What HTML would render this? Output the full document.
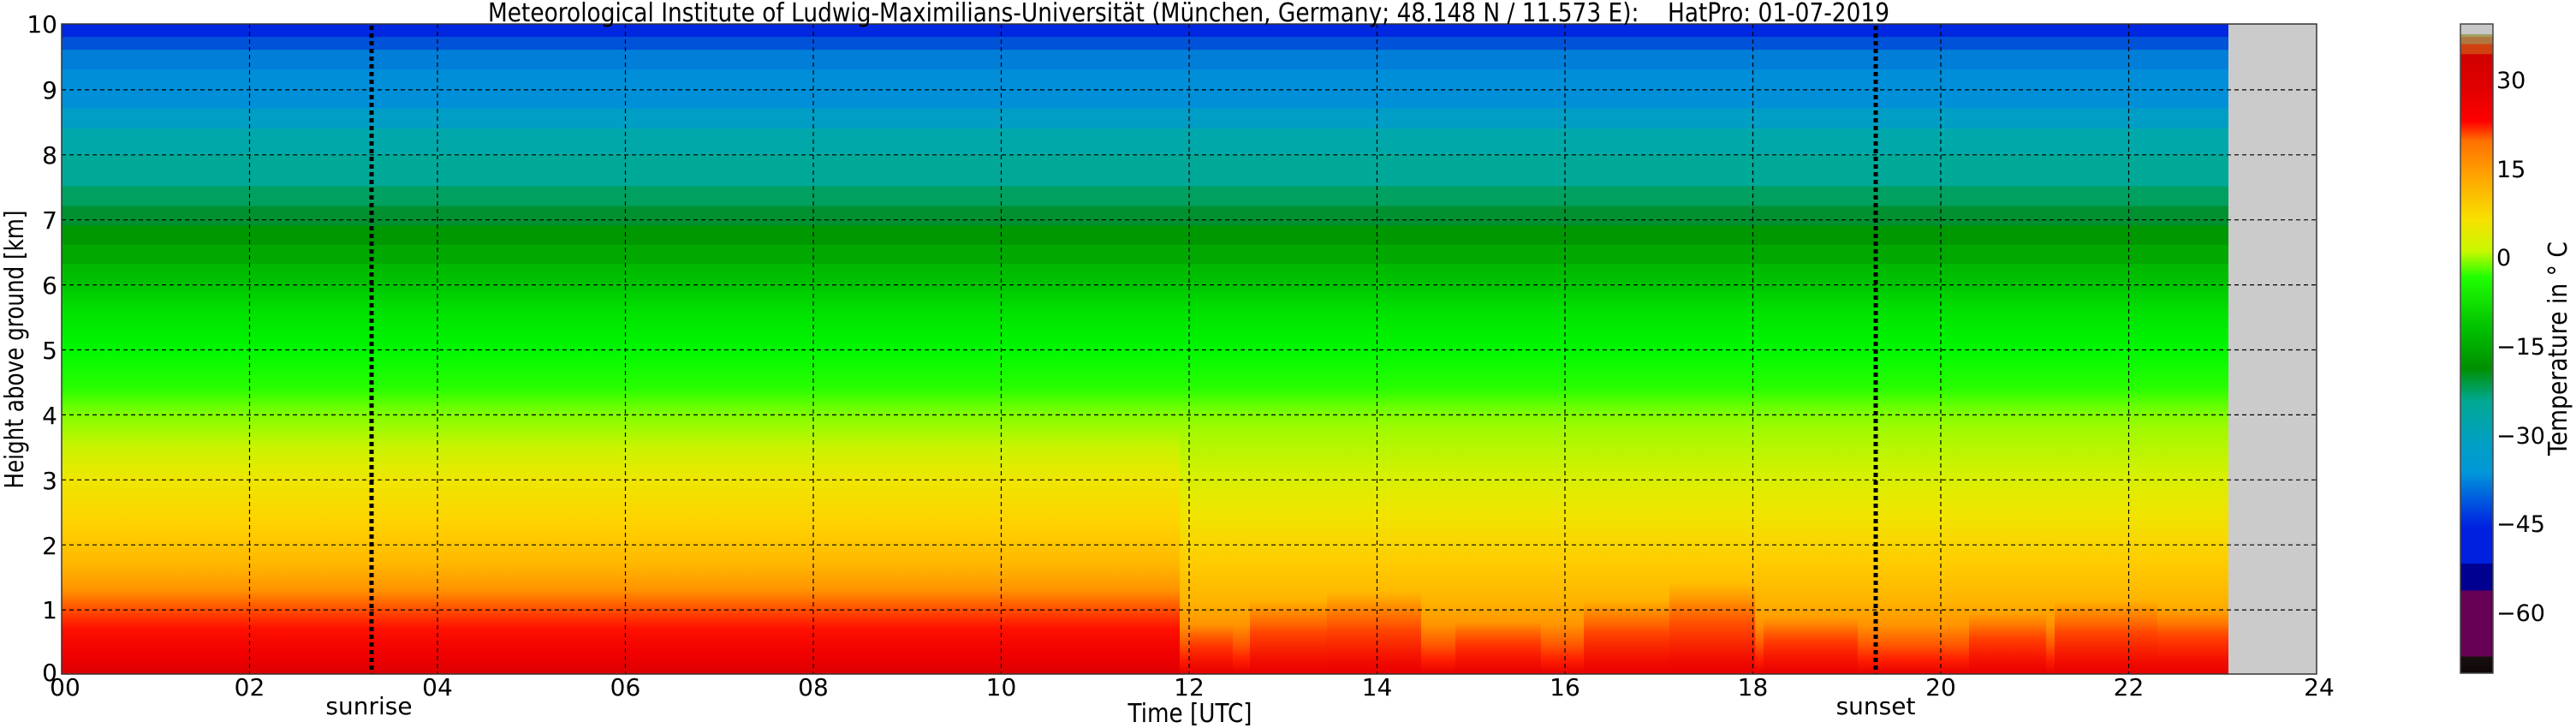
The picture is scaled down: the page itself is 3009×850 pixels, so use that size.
<!DOCTYPE html>
<html><head><meta charset="utf-8"><style>html,body{margin:0;padding:0;background:#fff}svg{display:block}</style></head>
<body>
<svg width="3009" height="850" viewBox="0 0 3009 850" xmlns="http://www.w3.org/2000/svg" font-family="'DejaVu Sans','Liberation Sans',sans-serif">
<defs>
<linearGradient id="g1" gradientUnits="userSpaceOnUse" x1="0" y1="28" x2="0" y2="787">
<stop offset="0" stop-color="#0028e0"/><stop offset="0.0198" stop-color="#0028e0"/>
<stop offset="0.0198" stop-color="#0052d8"/><stop offset="0.0395" stop-color="#0052d8"/>
<stop offset="0.0395" stop-color="#007ed8"/><stop offset="0.0698" stop-color="#007ed8"/>
<stop offset="0.0698" stop-color="#008ed8"/><stop offset="0.13" stop-color="#0090d8"/>
<stop offset="0.13" stop-color="#009dc4"/><stop offset="0.161" stop-color="#009dc4"/>
<stop offset="0.161" stop-color="#00a8ac"/><stop offset="0.2" stop-color="#00a8a8"/>
<stop offset="0.2" stop-color="#00a898"/><stop offset="0.25" stop-color="#00a898"/>
<stop offset="0.25" stop-color="#00a060"/><stop offset="0.28" stop-color="#00a060"/>
<stop offset="0.28" stop-color="#009030"/><stop offset="0.31" stop-color="#009030"/>
<stop offset="0.31" stop-color="#009800"/><stop offset="0.34" stop-color="#009800"/>
<stop offset="0.34" stop-color="#00a800"/><stop offset="0.369" stop-color="#00a800"/>
<stop offset="0.369" stop-color="#00b800"/><stop offset="0.395" stop-color="#00c000"/>
<stop offset="0.44" stop-color="#00e000"/>
<stop offset="0.5" stop-color="#00f800"/>
<stop offset="0.56" stop-color="#28ff00"/>
<stop offset="0.6" stop-color="#80ff00"/>
<stop offset="0.65" stop-color="#c8f400"/>
<stop offset="0.7" stop-color="#eee600"/>
<stop offset="0.77" stop-color="#ffd200"/>
<stop offset="0.83" stop-color="#ffb800"/>
<stop offset="0.87" stop-color="#ff9400"/>
<stop offset="0.9" stop-color="#ff5000"/>
<stop offset="0.93" stop-color="#ff1000"/>
<stop offset="0.97" stop-color="#f00000"/>
<stop offset="1" stop-color="#dc0000"/>
</linearGradient>
<linearGradient id="g2" gradientUnits="userSpaceOnUse" x1="0" y1="500" x2="0" y2="787">
<stop offset="0" stop-color="#a0fa00"/>
<stop offset="0.2" stop-color="#d8f000"/>
<stop offset="0.35" stop-color="#f0e400"/>
<stop offset="0.55" stop-color="#ffcc00"/>
<stop offset="0.7" stop-color="#ffb400"/>
<stop offset="0.8" stop-color="#ff9400"/>
<stop offset="0.88" stop-color="#ff5800"/>
<stop offset="0.94" stop-color="#ff2000"/>
<stop offset="1" stop-color="#e80000"/>
</linearGradient>
<linearGradient id="red" x1="0" y1="0" x2="0" y2="1">
<stop offset="0" stop-color="#ff4000" stop-opacity="0"/>
<stop offset="0.45" stop-color="#ff2000" stop-opacity="0.6"/>
<stop offset="1" stop-color="#e80000" stop-opacity="0.9"/>
</linearGradient>
<linearGradient id="cb" x1="0" y1="0" x2="0" y2="1">
<stop offset="0" stop-color="#c8c8c8"/><stop offset="0.016" stop-color="#c8c8c8"/>
<stop offset="0.016" stop-color="#a0a060"/><stop offset="0.02" stop-color="#a0a060"/>
<stop offset="0.02" stop-color="#b07840"/><stop offset="0.031" stop-color="#b07840"/>
<stop offset="0.031" stop-color="#d04010"/><stop offset="0.046" stop-color="#d04010"/>
<stop offset="0.047" stop-color="#d00000"/>
<stop offset="0.1" stop-color="#e00000"/>
<stop offset="0.15" stop-color="#ff0000"/>
<stop offset="0.18" stop-color="#ff7000"/>
<stop offset="0.23" stop-color="#ffa000"/>
<stop offset="0.3" stop-color="#f8e000"/>
<stop offset="0.35" stop-color="#c8f800"/>
<stop offset="0.39" stop-color="#20ff00"/>
<stop offset="0.47" stop-color="#00c000"/>
<stop offset="0.53" stop-color="#009000"/>
<stop offset="0.58" stop-color="#00a890"/>
<stop offset="0.64" stop-color="#00a0c0"/>
<stop offset="0.69" stop-color="#0098d8"/>
<stop offset="0.74" stop-color="#0050e0"/>
<stop offset="0.776" stop-color="#0020e0"/><stop offset="0.831" stop-color="#0020e0"/>
<stop offset="0.831" stop-color="#000090"/><stop offset="0.873" stop-color="#000090"/>
<stop offset="0.873" stop-color="#660055"/><stop offset="0.974" stop-color="#660055"/>
<stop offset="0.974" stop-color="#181010"/><stop offset="1" stop-color="#100808"/>
</linearGradient>
</defs>

<!-- plot -->
<rect x="72" y="28" width="2531" height="759" fill="url(#g1)"/>
<rect x="1378" y="500" width="1225" height="287" fill="url(#g2)"/>
<g fill="url(#red)">
<rect x="1390" y="730" width="50" height="57"/>
<rect x="1460" y="700" width="90" height="87"/>
<rect x="1550" y="690" width="110" height="97"/>
<rect x="1700" y="725" width="100" height="62"/>
<rect x="1850" y="700" width="100" height="87"/>
<rect x="1950" y="680" width="100" height="107"/>
<rect x="2060" y="720" width="110" height="67"/>
<rect x="2300" y="715" width="90" height="72"/>
<rect x="2400" y="700" width="120" height="87"/>
<rect x="2520" y="710" width="83" height="77"/>
</g>
<rect x="2603" y="28" width="103" height="759" fill="#cbcbcb"/>

<!-- grid -->
<g stroke="#000" stroke-width="1.2" stroke-dasharray="5,4" fill="none">
<path d="M72 104.9H2706M72 180.8H2706M72 256.7H2706M72 332.6H2706M72 408.5H2706M72 484.4H2706M72 560.3H2706M72 636.2H2706M72 712.1H2706"/>
<path d="M291.5 28V787M511 28V787M730.5 28V787M950 28V787M1169.5 28V787M1389 28V787M1608.5 28V787M1828 28V787M2047.5 28V787M2267 28V787M2486.5 28V787"/>
</g>
<g stroke="#000" stroke-width="5" stroke-dasharray="5,4">
<path d="M434 30V787M2191 30V787"/>
</g>
<rect x="72" y="28" width="2634" height="759" fill="none" stroke="#333" stroke-width="1.5"/>

<!-- title -->
<text x="570" y="25" font-size="30" textLength="1637" lengthAdjust="spacingAndGlyphs" fill="#000" xml:space="preserve">Meteorological Institute of Ludwig-Maximilians-Universität (München, Germany; 48.148 N / 11.573 E):    HatPro: 01-07-2019</text>

<!-- y ticks -->
<g font-size="28" text-anchor="end" fill="#000">
<text x="67" y="38">10</text><text x="67" y="115">9</text><text x="67" y="191">8</text><text x="67" y="267">7</text><text x="67" y="343">6</text><text x="67" y="419">5</text><text x="67" y="495">4</text><text x="67" y="571">3</text><text x="67" y="647">2</text><text x="67" y="722">1</text><text x="67" y="795">0</text>
</g>
<text transform="translate(27,408) rotate(-90)" font-size="30" text-anchor="middle" textLength="325" lengthAdjust="spacingAndGlyphs">Height above ground [km]</text>

<!-- x ticks -->
<g font-size="28" text-anchor="middle" fill="#000">
<text x="76" y="812">00</text><text x="291.5" y="812">02</text><text x="511" y="812">04</text><text x="730.5" y="812">06</text><text x="950" y="812">08</text><text x="1169.5" y="812">10</text><text x="1389" y="812">12</text><text x="1608.5" y="812">14</text><text x="1828" y="812">16</text><text x="2047.5" y="812">18</text><text x="2267" y="812">20</text><text x="2486.5" y="812">22</text><text x="2709" y="812">24</text>
</g>
<text x="431" y="834" font-size="28" text-anchor="middle">sunrise</text>
<text x="2191" y="834" font-size="28" text-anchor="middle">sunset</text>
<text x="1390" y="843" font-size="30" text-anchor="middle" textLength="145" lengthAdjust="spacingAndGlyphs">Time [UTC]</text>

<!-- colorbar -->
<rect x="2874" y="28" width="38" height="758" fill="url(#cb)" stroke="#444" stroke-width="1.5"/>
<g font-size="27" fill="#000">
<text x="2916" y="103">30</text><text x="2916" y="207">15</text><text x="2916" y="310">0</text>
<text x="2916" y="414">−15</text><text x="2916" y="518">−30</text><text x="2916" y="621">−45</text><text x="2916" y="725">−60</text>
</g>
<text transform="translate(2998,407) rotate(-90)" font-size="30" text-anchor="middle" textLength="250" lengthAdjust="spacingAndGlyphs">Temperature in ° C</text>
</svg>
</body></html>
